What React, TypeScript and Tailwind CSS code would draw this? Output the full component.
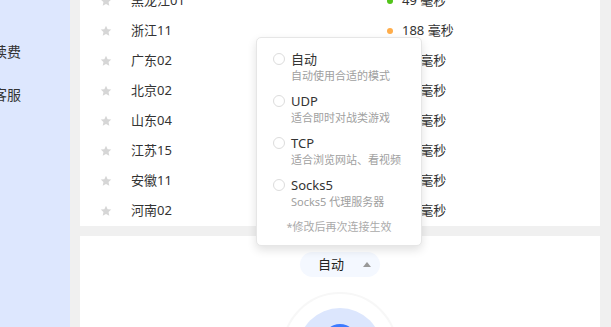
import React from "react";

interface Node {
  name: string;
  delay: number;
}

const nodes: Node[] = [
  { name: "黑龙江01", delay: 49 },
  { name: "浙江11", delay: 188 },
  { name: "广东02", delay: 36 },
  { name: "北京02", delay: 42 },
  { name: "山东04", delay: 51 },
  { name: "江苏15", delay: 39 },
  { name: "安徽11", delay: 47 },
  { name: "河南02", delay: 55 },
];

const modes = [
  { label: "自动", desc: "自动使用合适的模式" },
  { label: "UDP", desc: "适合即时对战类游戏" },
  { label: "TCP", desc: "适合浏览网站、看视频" },
  { label: "Socks5", desc: "Socks5 代理服务器" },
];

function Star() {
  return (
    <svg className="h-[12px] w-[12px] text-[#d6d6d6]" viewBox="0 0 24 24" fill="currentColor">
      <path d="M12 1.5l3.2 6.9 7.3.8-5.4 5 1.5 7.3L12 17.8l-6.6 3.7 1.5-7.3-5.4-5 7.3-.8z" />
    </svg>
  );
}

export default function App() {
  return (
    <div
      className="flex h-[327px] w-[611px] overflow-hidden bg-[#f0f0f0] text-[#333]"
      style={{ fontFamily: '"Noto Sans", "Noto Sans CJK SC", sans-serif' }}
    >
      {/* sidebar, scrolled off to the left */}
      <aside className="w-[70px] shrink-0 overflow-hidden bg-[#dde7fe]">
        <div className="-ml-[7px] flex flex-col gap-[23px] pt-[42px] text-[14px] leading-[20px]">
          <span>续费</span>
          <span>客服</span>
        </div>
      </aside>

      <main className="ml-[10px] flex w-[520px] shrink-0 flex-col">
        {/* node list */}
        <div className="-mt-[14px] h-[240px] shrink-0 bg-white">
          {nodes.map((n) => (
            <div key={n.name} className="flex h-[30px] items-center pl-[20px] text-[13px]">
              <Star />
              <span className="ml-[19px] w-[256px]">{n.name}</span>
              <span
                className={`h-[6px] w-[6px] rounded-full ${
                  n.delay > 100 ? "bg-[#ffad4a]" : "bg-[#52c41a]"
                }`}
              />
              <span className="ml-[9px]">{n.delay} 毫秒</span>
            </div>
          ))}
        </div>

        {/* connect area */}
        <div className="mt-[10px] flex flex-1 flex-col items-center bg-white pt-[16px]">
          <div className="relative">
            <div className="absolute bottom-[calc(100%+6px)] left-[-44px] h-[209px] w-[166px] rounded-[5px] border border-[#e6e6e6] bg-white pt-[12px] shadow-[0_4px_10px_rgba(0,0,0,0.12)]">
              <div className="flex flex-col gap-[8px]">
                {modes.map((m) => (
                  <div key={m.label} className="pl-[16px]">
                    <div className="flex items-center gap-[6px]">
                      <span className="h-[12px] w-[12px] rounded-full border border-[#dcdcdc]" />
                      <span className="text-[13px] leading-[18px] text-[#333]">{m.label}</span>
                    </div>
                    <div className="pl-[18px] text-[11px] leading-[16px] text-[#a0a0a0]">{m.desc}</div>
                  </div>
                ))}
              </div>
              <div className="mt-[9px] text-center text-[11px] leading-[16px] text-[#aaa]">
                *修改后再次连接生效
              </div>
            </div>

            <button className="flex h-[25px] w-[80px] items-center rounded-full bg-[#f4f8ff] pl-[18px] text-[13px] text-[#222]">
              <span>自动</span>
              <span className="ml-[19px] h-0 w-0 border-x-[4px] border-b-[5px] border-x-transparent border-b-[#999]" />
            </button>
          </div>

          <div className="mt-[15px] flex h-[116px] w-[116px] shrink-0 items-center justify-center rounded-full border-2 border-[#f7f7f7]">
            <div className="flex h-[84px] w-[84px] flex-col items-center rounded-full bg-[#dce6fd] pt-[16px]">
              <div className="h-[34px] w-[34px] rounded-full bg-[#3d7bff]" />
            </div>
          </div>
        </div>
      </main>
    </div>
  );
}
